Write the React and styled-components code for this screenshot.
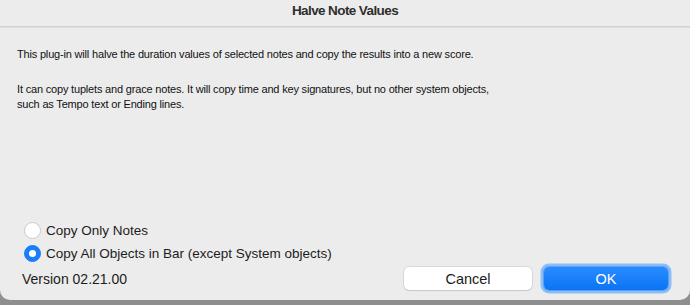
import { useState } from "react";
import styled, { createGlobalStyle } from "styled-components";

const GlobalStyle = createGlobalStyle`
  html, body {
    margin: 0;
    padding: 0;
    height: 100%;
  }
  body {
    background: linear-gradient(#b4b4b4, #8e8e8e);
    font-family: "Liberation Sans", Arial, sans-serif;
    -webkit-font-smoothing: antialiased;
  }
`;

const options = [
  { id: "notes", label: "Copy Only Notes" },
  { id: "all", label: "Copy All Objects in Bar (except System objects)" },
];

function App() {
  const [choice, setChoice] = useState("all");

  return (
    <>
      <GlobalStyle />
      <Window>
        <TitleBar>Halve Note Values</TitleBar>
        <Content>
          <Message>
            <p>This plug-in will halve the duration values of selected notes and copy the results into a new score.</p>
            <p>It can copy tuplets and grace notes. It will copy time and key signatures, but no other system objects, such as Tempo text or Ending lines.</p>
          </Message>

          <Options>
            {options.map((o) => (
              <OptionRow key={o.id} onClick={() => setChoice(o.id)}>
                <Radio $checked={choice === o.id} />
                {o.label}
              </OptionRow>
            ))}
          </Options>

          <Footer>
            <Version>Version 02.21.00</Version>
            <Buttons>
              <Button>Cancel</Button>
              <Button $primary>OK</Button>
            </Buttons>
          </Footer>
        </Content>
      </Window>
    </>
  );
}

const Window = styled.div`
  height: 300px;
  display: flex;
  flex-direction: column;
  background: #ececec;
  border-radius: 0 0 10px 10px;
  overflow: hidden;
`;

const TitleBar = styled.div`
  height: 27px;
  box-sizing: border-box;
  padding-bottom: 5px;
  flex-shrink: 0;
  display: flex;
  align-items: center;
  justify-content: center;
  font-weight: bold;
  font-size: 13.5px;
  letter-spacing: -0.6px;
  color: #2e2e2e;
  border-bottom: 1px solid #cfcfcf;
  box-shadow: 0 1px 0 #dedede;
`;

const Content = styled.div`
  flex: 1;
  display: flex;
  flex-direction: column;
  padding: 20px 0 10px;
`;

const Message = styled.div`
  max-width: 478px;
  padding: 0 17px;
  font-size: 11px;
  letter-spacing: -0.18px;
  line-height: 15px;
  color: #111;

  p {
    margin: 0 0 20px;
  }
`;

const Options = styled.div`
  margin-top: auto;
  padding: 0 24px;
  display: flex;
  flex-direction: column;
`;

const OptionRow = styled.label`
  height: 23px;
  display: flex;
  align-items: center;
  gap: 5px;
  font-size: 13.5px;
  color: #1c1c1c;
  cursor: default;
`;

const Radio = styled.span`
  width: 17px;
  height: 17px;
  box-sizing: border-box;
  border-radius: 50%;
  flex-shrink: 0;
  position: relative;
  background: ${({ $checked }) => ($checked ? "#1a7ef7" : "#fff")};
  border: 1px solid ${({ $checked }) => ($checked ? "#1a7ef7" : "#cacaca")};

  &::after {
    content: "";
    display: ${({ $checked }) => ($checked ? "block" : "none")};
    position: absolute;
    left: 50%;
    top: 50%;
    width: 7px;
    height: 7px;
    margin: -3.5px 0 0 -3.5px;
    border-radius: 50%;
    background: #fff;
  }
`;

const Footer = styled.div`
  margin-top: 2px;
  padding: 0 22px;
  display: flex;
  align-items: center;
  justify-content: space-between;
`;

const Version = styled.div`
  font-size: 14px;
  color: #1c1c1c;
`;

const Buttons = styled.div`
  display: flex;
  gap: 12px;
`;

const Button = styled.button`
  width: ${({ $primary }) => ($primary ? "124px" : "128px")};
  height: 23px;
  padding: 0;
  border: none;
  border-radius: 5px;
  font-family: "Liberation Sans", Arial, sans-serif;
  font-size: 14.5px;
  color: ${({ $primary }) => ($primary ? "#fff" : "#1c1c1c")};
  background: ${({ $primary }) =>
    $primary ? "linear-gradient(#2b8bff, #0a74f5)" : "#fff"};
  box-shadow: ${({ $primary }) =>
    $primary
      ? "0 0 0 1px #5aa0f2, 0 0 0 3.5px #8dbdf6"
      : "0 0 0 0.5px #c2c2c2, 0 1px 1px rgba(0,0,0,0.12)"};
`;

export default App;
